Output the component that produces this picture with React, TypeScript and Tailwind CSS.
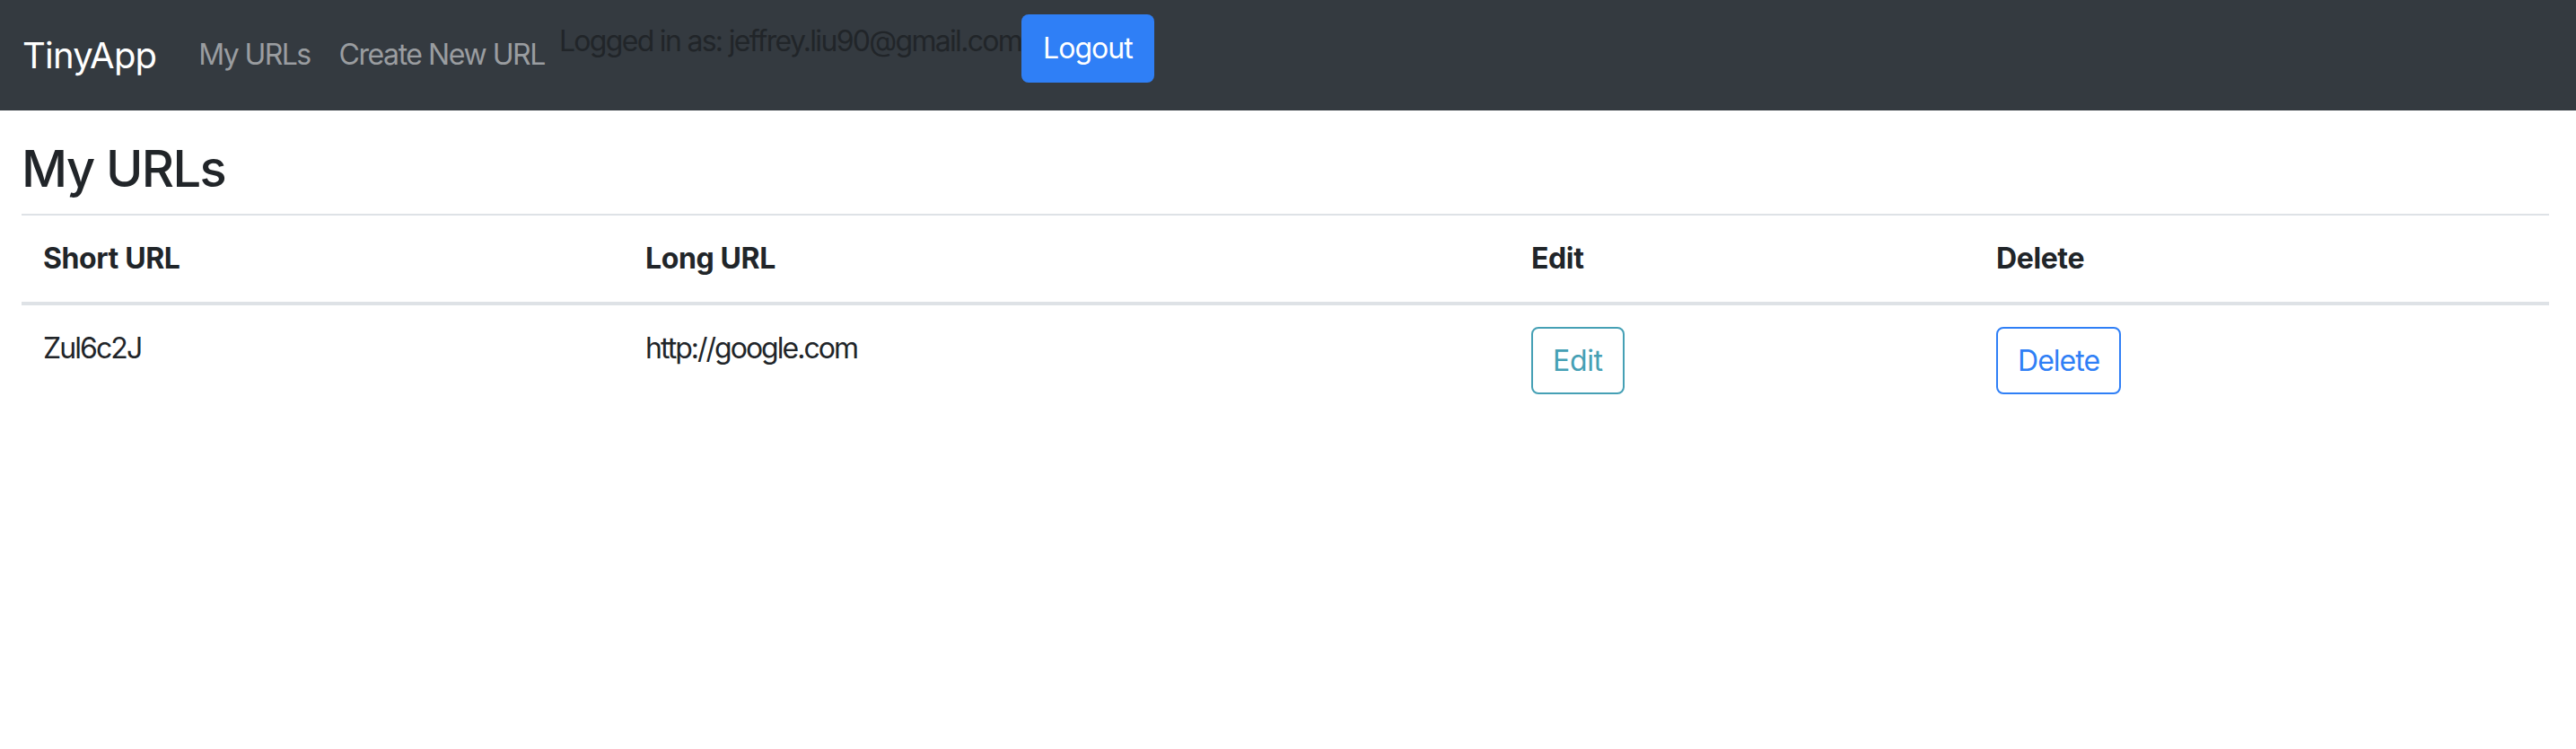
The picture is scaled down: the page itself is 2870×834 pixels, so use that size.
import React from 'react';

const font = { fontFamily: 'Inter, "Noto Sans", sans-serif' };

const urls = [{ short: 'Zul6c2J', long: 'http://google.com' }];

export default function App() {
  return (
    <div className="min-h-screen bg-white text-[#212529] tracking-[-0.042em]" style={font}>
      {/* Navbar */}
      <nav className="h-[123px] bg-[#343a40] flex items-start pl-[25px]">
        <a className="text-[40px] leading-[60px] tracking-[-0.02em] text-white mt-[32px] mr-[31px]">TinyApp</a>
        <div className="flex mt-[37px]">
          <a className="px-4 text-[32px] leading-[48px] tracking-[-0.05em] text-[#9a9da0]">My URLs</a>
          <a className="px-4 text-[32px] leading-[48px] tracking-[-0.045em] text-[#9a9da0]">Create New URL</a>
        </div>
        <div className="flex items-start">
          <span className="text-[32px] leading-[48px] tracking-[-0.053em] text-[#212529] mt-[22px]">
            Logged in as: jeffrey.liu90@gmail.com
          </span>
          <button className="mt-[16px] h-[76px] px-[24px] rounded-[8px] bg-[#2f7ff6] text-white text-[32px] leading-[48px] tracking-[-0.03em]">
            Logout
          </button>
        </div>
      </nav>

      {/* Content */}
      <main className="pl-[24px] pr-[30px]">
        <h3 className="text-[56px] leading-[67px] font-medium tracking-[-0.028em] mt-[32px] mb-[16px]">My URLs</h3>
        <table className="w-full table-fixed border-collapse text-[32px] leading-[48px]">
          <thead>
            <tr className="text-left tracking-[-0.012em]">
              <th className="w-[671px] p-[24px] font-bold border-t-2 border-b-4 border-[#dee2e6]">Short URL</th>
              <th className="w-[987px] p-[24px] font-bold border-t-2 border-b-4 border-[#dee2e6]">Long URL</th>
              <th className="w-[518px] p-[24px] font-bold border-t-2 border-b-4 border-[#dee2e6]">Edit</th>
              <th className="p-[24px] font-bold border-t-2 border-b-4 border-[#dee2e6]">Delete</th>
            </tr>
          </thead>
          <tbody>
            {urls.map((u) => (
              <tr key={u.short} className="align-top">
                <td className="p-[24px] tracking-[-0.06em]">{u.short}</td>
                <td className="p-[24px] tracking-[-0.062em]">{u.long}</td>
                <td className="p-[24px]">
                  <button className="h-[75px] px-[22px] rounded-[8px] border-2 border-[#45a0b5] text-[#45a0b5] leading-[48px] tracking-[-0.01em]">
                    Edit
                  </button>
                </td>
                <td className="p-[24px]">
                  <button className="h-[75px] px-[22px] rounded-[8px] border-2 border-[#2f7ff6] text-[#2f7ff6] leading-[48px] tracking-[-0.03em]">
                    Delete
                  </button>
                </td>
              </tr>
            ))}
          </tbody>
        </table>
      </main>
    </div>
  );
}
